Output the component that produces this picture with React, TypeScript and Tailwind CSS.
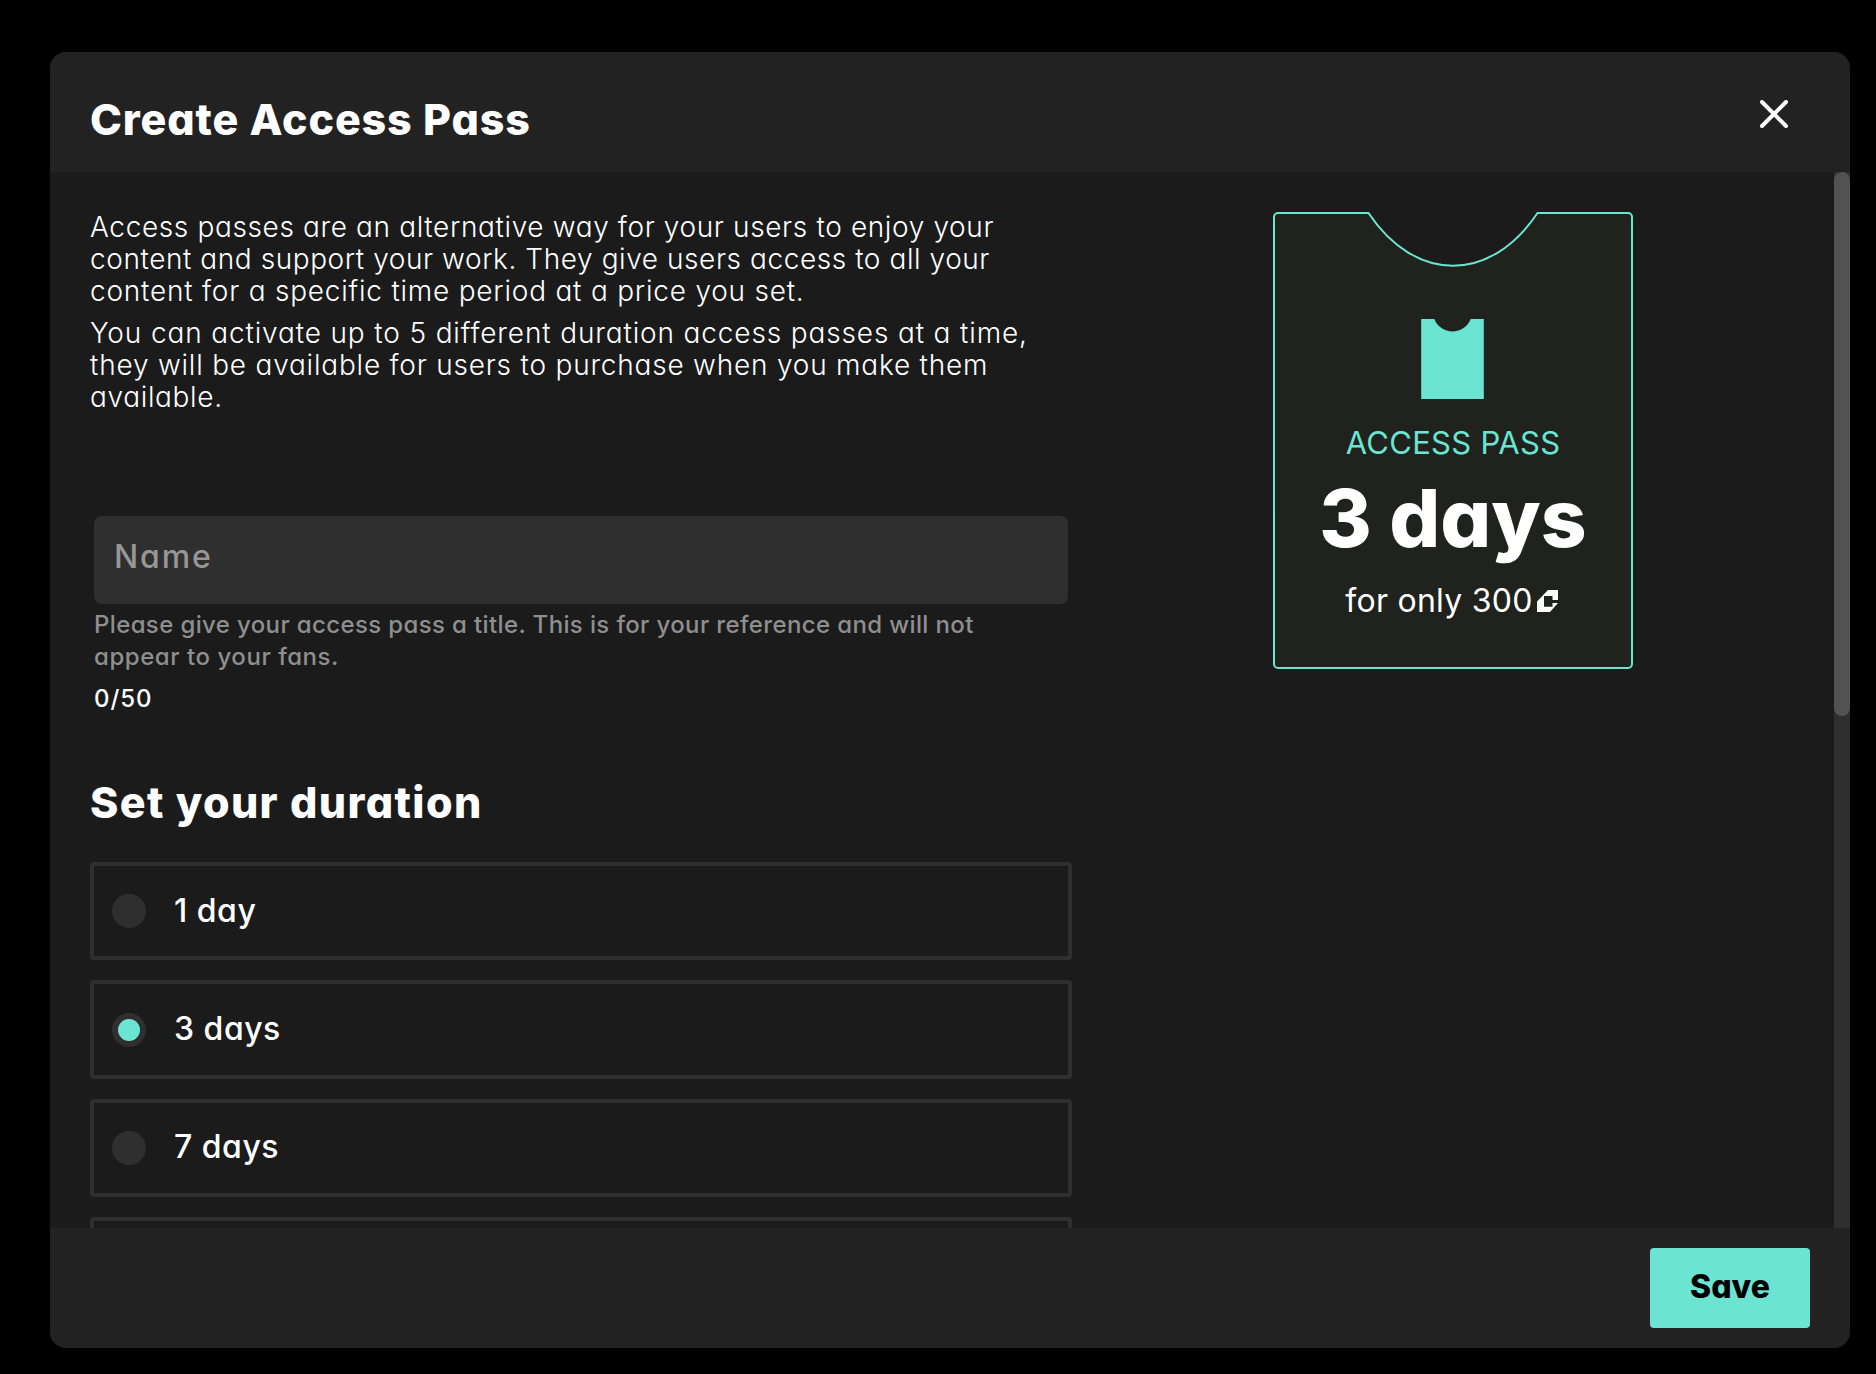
import { useState } from 'react';
import clsx from 'clsx';

// The last option only peeks in above the footer
const DURATIONS = ['1 day', '3 days', '7 days', ''];

const MAX_NAME_LENGTH = 50;

function CloseIcon() {
  return (
    <svg width="28" height="28" viewBox="0 0 28 28" fill="none" stroke="currentColor" strokeWidth="4">
      <path d="M2 2 26 26M26 2 2 26" strokeLinecap="round" />
    </svg>
  );
}

function TicketIcon() {
  return (
    <svg width="63" height="80" viewBox="0 0 63 80" fill="currentColor">
      <path d="M0.2 0H13.3A19.5 19.5 0 0 0 49.7 0H62.8V80H0.2Z" />
    </svg>
  );
}

function CreditIcon() {
  return (
    <svg width="21" height="22" viewBox="0 0 21 22" fill="currentColor">
      <path d="M11 0H21V10H15.5V6H7V16.7H15.5V13H21L13 22H0V11.5Z" />
    </svg>
  );
}

function PassPreview({ duration, price }: { duration: string; price: number }) {
  return (
    <div className="relative flex h-[457px] w-[360px] shrink-0 flex-col items-center whitespace-nowrap">
      {/* Ticket outline with the notch cut in the top edge */}
      <svg className="absolute inset-0" width="360" height="457" viewBox="0 0 360 457">
        <path
          d="M5 1H95.5C142.5 71.3 217.5 71.3 264.5 1H355A4 4 0 0 1 359 5V452A4 4 0 0 1 355 456H5A4 4 0 0 1 1 452V5A4 4 0 0 1 5 1Z"
          fill="#20221d"
          stroke="#6be5d1"
          strokeWidth="2"
        />
      </svg>
      <div className="relative mt-[107px] mr-px text-[#6be5d1]">
        <TicketIcon />
      </div>
      <p className="relative mt-6 text-[31px] leading-[40px] tracking-[0.3px] text-[#6be5d1]">ACCESS PASS</p>
      <p className="relative mt-[7px] text-[80px] leading-[96px] font-extrabold">{duration}</p>
      <p className="relative mt-[15px] mr-[3px] flex items-center gap-1 text-[32px] leading-[40px] tracking-[0.25px]">
        <span>for only {price}</span>
        <CreditIcon />
      </p>
    </div>
  );
}

function DurationOption({ label, checked, onSelect }: { label: string; checked: boolean; onSelect: () => void }) {
  return (
    <button
      type="button"
      role="radio"
      aria-checked={checked}
      onClick={onSelect}
      className="flex h-[98.4px] shrink-0 items-center rounded border-4 border-[#2f2f2f] pl-[18px] text-left"
    >
      <span className="flex size-[34px] items-center justify-center rounded-full bg-[#2f2f2f]">
        <span className={clsx('size-[22px] rounded-full', checked && 'bg-[#6be5d1]')} />
      </span>
      <span className="ml-7 pb-px text-[32px] leading-[40px] font-medium tracking-[0.5px]">{label}</span>
    </button>
  );
}

export default function App() {
  const [name, setName] = useState('');
  const [duration, setDuration] = useState('3 days');

  return (
    <main className="h-[1374px] w-[1876px] overflow-hidden bg-black pt-[52px] pl-[50px] font-[Inter,'Open_Sans',sans-serif] text-white [font-feature-settings:'cv11']">
      <div className="flex h-[1296px] w-[1800px] flex-col overflow-hidden rounded-2xl bg-[#1b1b1b]">
        <header className="flex h-[120px] shrink-0 items-start justify-between bg-[#222222] pr-[62px] pl-10">
          <h1 className="pt-[39px] text-[43px] leading-[56px] font-extrabold tracking-[0.87px] whitespace-nowrap">
            Create Access Pass
          </h1>
          <button type="button" aria-label="Close" className="mt-12">
            <CloseIcon />
          </button>
        </header>

        <div className="flex min-h-0 flex-1">
          <div className="flex min-w-0 flex-1 items-start overflow-hidden pl-10">
            <div className="flex w-[982px] shrink-0 flex-col pt-[39px]">
              <div className="flex flex-col gap-2.5 text-[28px] leading-8 font-light whitespace-nowrap">
                <p className="tracking-[0.63px]">
                  Access passes are an alternative way for your users to enjoy your
                  <br />
                  <span className="tracking-[0.57px]">
                    content and support your work. They give users access to all your
                  </span>
                  <br />
                  <span className="tracking-[0.78px]">content for a specific time period at a price you set.</span>
                </p>
                <p className="tracking-[0.86px]">
                  You can activate up to 5 different duration access passes at a time,
                  <br />
                  <span className="tracking-[0.79px]">
                    they will be available for users to purchase when you make them
                  </span>
                  <br />
                  <span className="tracking-[0.65px]">available.</span>
                </p>
              </div>

              <div className="mx-1 mt-[103px]">
                <input
                  value={name}
                  maxLength={MAX_NAME_LENGTH}
                  onChange={(e) => setName(e.target.value)}
                  placeholder="Name"
                  className="block h-[88px] w-full rounded-lg bg-[#2f2f2f] px-5 pb-2 text-[32px] font-medium tracking-[1.9px] outline-none placeholder:text-[#979797]"
                />
                <p className="mt-[5px] text-[24px] leading-8 font-medium tracking-[0.37px] whitespace-nowrap text-[#8f8f8f]">
                  Please give your access pass a title. This is for your reference and will not
                  <br />
                  <span className="tracking-[0.55px]">appear to your fans.</span>
                </p>
                <p className="mt-2.5 text-[24px] leading-8 font-medium tracking-[0.9px]">
                  {name.length}/{MAX_NAME_LENGTH}
                </p>
              </div>

              <h2 className="mt-[59px] mb-px text-[43px] leading-[56px] font-extrabold tracking-[1.4px] whitespace-nowrap">
                Set your duration
              </h2>
              <div role="radiogroup" className="mt-[31px] flex flex-col gap-5">
                {DURATIONS.map((label) => (
                  <DurationOption
                    key={label}
                    label={label}
                    checked={label === duration}
                    onSelect={() => setDuration(label)}
                  />
                ))}
              </div>
            </div>

            <div className="mt-10 ml-[201px]">
              <PassPreview duration={duration} price={300} />
            </div>
          </div>

          {/* Scrollbar */}
          <div className="w-4 shrink-0 bg-[#2f2f2f]">
            <div className="h-[544px] rounded-full bg-[#525253]" />
          </div>
        </div>

        <footer className="flex h-[120px] shrink-0 items-center justify-end bg-[#222222] pr-10">
          <button type="button" className="h-20 w-40 rounded bg-[#6be5d1] pb-0.5 text-[32px] font-extrabold text-black">
            Save
          </button>
        </footer>
      </div>
    </main>
  );
}
